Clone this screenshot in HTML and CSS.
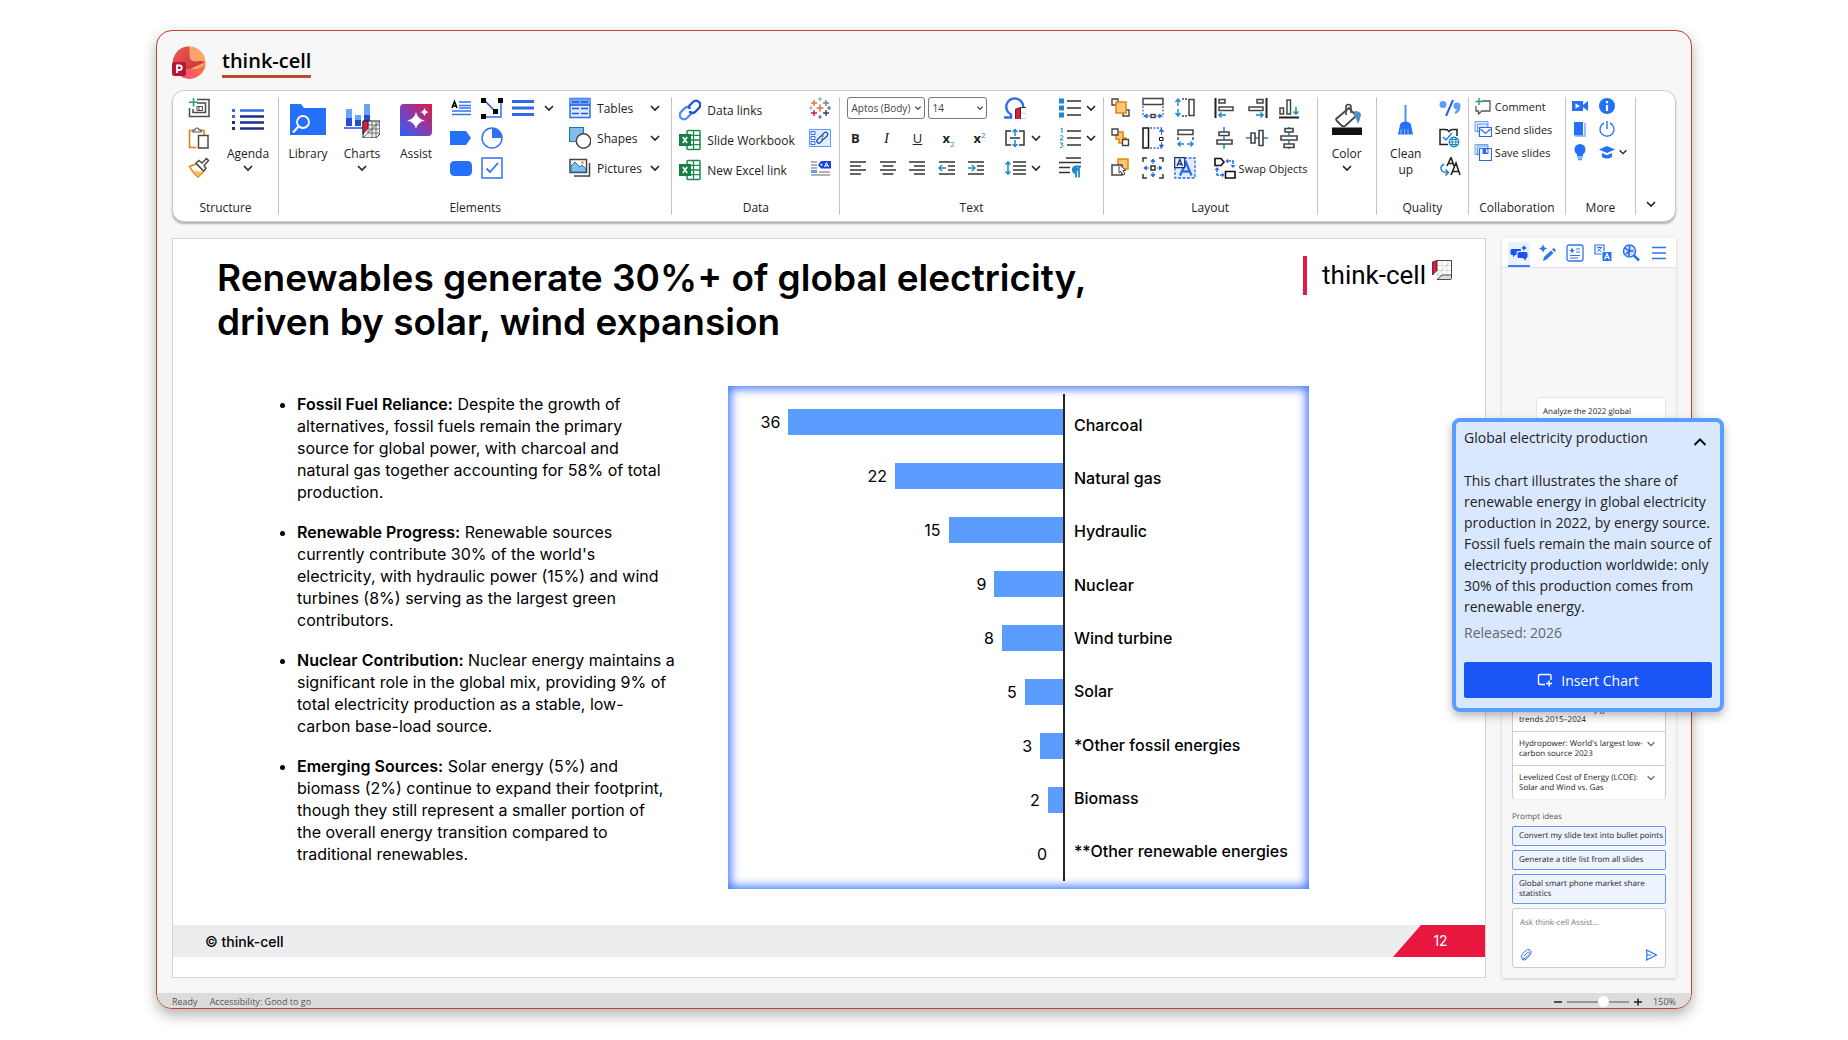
FILE: index.html
```html
<!DOCTYPE html>
<html lang="en">
<head>
    <meta charset="UTF-8">
    <meta name="viewport" content="width=device-width, initial-scale=1.0">
    <title>think-cell</title>
    <link rel="stylesheet" href="styles.css">
</head>
<body>
    <!-- shared icons -->
    <svg class="defs" aria-hidden="true">
        <symbol id="chev" viewBox="0 0 12 12"><path d="M2 4l4 4 4-4" fill="none" stroke="currentColor" stroke-width="1.6"/></symbol>
        <symbol id="excel" viewBox="0 0 22 22">
            <rect x="8" y="1.5" width="13" height="19" rx="1" fill="#fff" stroke="#1d8a4e" stroke-width="1.5"/>
            <path d="M8 6.3h13M8 11h13M8 15.7h13M14.5 2v18.500" stroke="#1d8a4e" stroke-width="1.3"/>
            <rect y="5" width="12" height="12" fill="#15803f"/>
            <path d="M3.800 8l4.400 6M8.200 8l-4.400 6" stroke="#fff" stroke-width="1.600"/>
        </symbol>
        <symbol id="cube" viewBox="0 0 20 20">
            <path d="M5 .5h14.500v15H5z" fill="#fff" stroke="#ccc" stroke-width=".7"/>
            <path d="M10 .5v15M15 .5v15M5 5.500h14.500M5 10.500h14.500M5 15L19 1" stroke="#ccc" stroke-width=".7"/>
            <path d="M.5 2L5 .5v10L.5 15z" fill="#e8173d" stroke="#222" stroke-width=".8"/>
            <path d="M5 19.500l5-4.500h9.500v3q0 1.500-1.500 1.500z" fill="#ddd" stroke="#222" stroke-width=".8"/>
            <path d="M5 .5h14.500V15" fill="none" stroke="#222" stroke-width=".8"/>
        </symbol>
    </svg>

    <div class="window">
        <header class="titlebar">
            <svg class="app-logo" viewBox="0 0 34 34">
                <defs>
                    <linearGradient id="lg1" x1="0" y1="0" x2="1" y2="1"><stop offset="0" stop-color="#f79a8a"/><stop offset="1" stop-color="#fcb04a"/></linearGradient>
                    <linearGradient id="lg2" x1="0" y1="0" x2="1" y2="1"><stop offset="0" stop-color="#f05a4c"/><stop offset="1" stop-color="#c0303e"/></linearGradient>
                    <linearGradient id="lg3" x1="0" y1="0" x2="1" y2="0"><stop offset="0" stop-color="#f0487f"/><stop offset="1" stop-color="#ff7043"/></linearGradient>
                </defs>
                <circle cx="17.500" cy="16.500" r="16" fill="url(#lg1)"/>
                <path d="M17.500.5A16 16 0 0 0 4 26l14-3 15.500-7q-4-1.500-9-.5Q17.500 16 17.500 9z" fill="url(#lg2)"/>
                <path d="M33.500 17A16 16 0 0 1 6 28l12-5q11 1 15.500-6z" fill="url(#lg3)"/>
                <rect y="16" width="14" height="14" rx="2.500" fill="#b3173a"/>
                <path d="M5 27v-7.500h2.500a2.200 2.200 0 0 1 0 4.500H5" fill="none" stroke="#fff" stroke-width="1.800"/>
            </svg>
            <h1 class="app-name">think-cell</h1>
        </header>

        <nav class="ribbon" aria-label="Ribbon">
            <section class="group g-structure">
                <div class="group-body">
                    <div class="stack">
                        <button class="tool" aria-label="Add slide"><svg viewBox="0 0 22 22"><path d="M9 2.500h12v17H1.500V11M9 6h8.500v9.500H5V12" fill="none" stroke="#4a4a4a" stroke-width="1.500"/><path d="M11 9.500h3.500v4H9v-4h2v4" fill="none" stroke="#4a4a4a"/><path d="M5.500 1v8.500M1 5.300h9" stroke="#1fa183" stroke-width="1.600"/></svg></button>
                        <button class="tool" aria-label="Paste"><svg viewBox="0 0 22 22"><path d="M5.500 3.500h-4v17h7M12 3.500h4V8" fill="none" stroke="#e8820c" stroke-width="1.600"/><path d="M5 5V3h2a2 2 0 0 1 4 0h2v2z" fill="#fff" stroke="#4a4a4a" stroke-width="1.200"/><rect x="10.500" y="8.500" width="9.500" height="12.500" fill="#fff" stroke="#4a4a4a" stroke-width="1.500"/></svg></button>
                        <button class="tool" aria-label="Format painter"><svg viewBox="0 0 22 22"><path d="M8 7l-6.500 2.500q3 6 8.500 10.500l6-6z" fill="#fff" stroke="#e8820c" stroke-width="1.500"/><path d="M4.500 13l9 2-3.500 4z" fill="#fbbf62"/><path d="M8 6l3-2.500 3 2.500 4.500-4.500 2 2L16 8.500l2 3-2.500 2.500z" fill="#fff" stroke="#4a4a4a" stroke-width="1.500"/></svg></button>
                    </div>
                    <button class="big"><svg class="big-icon" viewBox="0 0 36 36"><path d="M10 8.500h24" stroke="#2f6be8" stroke-width="2.500"/><path d="M10 14.500h24M10 20.500h24M10 26.500h24" stroke="#1c2f8c" stroke-width="2.500"/><path d="M3.500 7v3M3.500 13v3" stroke="#2f6be8" stroke-width="3"/><path d="M3.500 19v3M3.500 25v3" stroke="#1c2f8c" stroke-width="3"/></svg><span>Agenda</span><svg class="chev"><use href="#chev"/></svg></button>
                </div>
                <h2 class="group-label">Structure</h2>
            </section>

            <section class="group g-elements">
                <div class="group-body">
                    <button class="big"><svg class="big-icon" viewBox="0 0 36 36"><path d="M0 2h11l3 4h22v27H0z" fill="#2470fb"/><circle cx="13" cy="20" r="6" fill="none" stroke="#fff" stroke-width="1.800"/><path d="M9 24l-6 6.500" stroke="#fff" stroke-width="2"/></svg><span>Library</span></button>
                    <button class="big"><svg class="big-icon" viewBox="0 0 36 36"><path d="M2 7h6v9H2zM11 13h6v5h-6zM20 2h6v11h-6z" fill="#6ba3f7"/><path d="M2 16h6v8H2zM11 18h6v6h-6zM20 13h6v11h-6z" fill="#1f4fd6"/><path d="M0 26h21" stroke="#1f4fd6" stroke-width="1.500"/><path d="M19 19h17v13l-4 4H19z" fill="#eee" stroke="#222"/><path d="M24 19v12l-5 5M24 31h12M28 19v17M32 19v17M24 23h12M24 27h12M24 31L36 19" fill="none" stroke="#555" stroke-width=".8"/><path d="M19 19h5v7l-5 6z" fill="#e8173d" stroke="#222" stroke-width=".8"/></svg><span>Charts</span><svg class="chev"><use href="#chev"/></svg></button>
                    <button class="big"><svg class="big-icon" viewBox="0 0 36 36"><defs><linearGradient id="as" x1="0" y1="1" x2="1" y2="0"><stop offset="0" stop-color="#2a62f5"/><stop offset=".5" stop-color="#8a3bb0"/><stop offset="1" stop-color="#e0193f"/></linearGradient></defs><path d="M2 6q0-4 4-4h28v28q0 4-4 4H2z" fill="url(#as)"/><path d="M18 10q1.500 7 9 8.500-7.500 1.500-9 8.500-1.500-7-9-8.500 7.500-1.500 9-8.500zM26.500 6q.7 3 4 4-3.300 1-4 4-.7-3-4-4 3.300-1 4-4z" fill="#fff"/></svg><span>Assist</span></button>
                    <div class="tool-grid four">
                        <button class="tool" aria-label="Text box"><svg viewBox="0 0 22 22"><path d="M9 5h12M9 8.500h12M2 14h19M2 17.500h19M9 11h12" stroke="#2f73f0" stroke-width="1.300"/><path d="M2 11l2.500-6.500L7 11M2.500 9h4" fill="none" stroke="#000" stroke-width="1.600"/></svg></button>
                        <button class="tool" aria-label="Connector"><svg viewBox="0 0 22 22"><path d="M20 3v17H3" fill="none" stroke="#2f73f0" stroke-width="1.500"/><path d="M3 3l11 11" stroke="#2255b8" stroke-width="1.500"/><path d="M0 1h5v5H0zM17 1h5v5h-5zM12 12h5v5h-5zM0 17h5v5H0z" fill="#000"/></svg></button>
                        <button class="tool" aria-label="Lines"><svg viewBox="0 0 22 22"><path d="M0 4.500h22M0 11h22M0 17.500h22" stroke="#2f6be8" stroke-width="3"/></svg></button>
                        <button class="tool slim" aria-label="More lines"><svg class="chev"><use href="#chev"/></svg></button>
                        <button class="tool" aria-label="Pentagon"><svg viewBox="0 0 22 22"><path d="M0 4h16l5 7-5 7H0z" fill="#2470fb"/></svg></button>
                        <button class="tool" aria-label="Harvey ball"><svg viewBox="0 0 22 22"><circle cx="11" cy="11" r="10" fill="#fff" stroke="#2f73f0" stroke-width="1.500"/><path d="M11 11V1a10 10 0 0 1 10 10z" fill="#2f73f0"/></svg></button>
                        <span></span><span></span>
                        <button class="tool" aria-label="Rounded box"><svg viewBox="0 0 22 22"><rect y="4" width="22" height="15" rx="4.500" fill="#2470fb"/></svg></button>
                        <button class="tool" aria-label="Checkbox"><svg viewBox="0 0 22 22"><rect x="1" y="1" width="20" height="20" fill="#fff" stroke="#2f73f0" stroke-width="1.500"/><path d="M5.500 11.500l3.500 3.500 8-9" fill="none" stroke="#2f73f0" stroke-width="1.800"/></svg></button>
                    </div>
                    <div class="stack wide">
                        <button class="row"><svg viewBox="0 0 22 22"><path d="M1 1.500h20v19H1z" fill="#dbe8ff" stroke="#2f6be8" stroke-width="1.500"/><path d="M1 1.500h20v6H1z" fill="#6ba3f7"/><path d="M3 5h7M12 5h7M3 11.500h7M12 11.500h7M3 16.500h7M12 16.500h7M1 8h20" stroke="#2255d8" stroke-width="1.300"/></svg><span>Tables</span><svg class="chev"><use href="#chev"/></svg></button>
                        <button class="row"><svg viewBox="0 0 22 22"><path d="M.5.5h14v14H.5z" fill="#83bdea" stroke="#1477b8" stroke-width="1.200"/><circle cx="14.500" cy="14" r="7.200" fill="#fff" stroke="#444" stroke-width="1.500"/></svg><span>Shapes</span><svg class="chev"><use href="#chev"/></svg></button>
                        <button class="row"><svg viewBox="0 0 22 22"><path d="M20.500 6v13H5" fill="none" stroke="#444" stroke-width="1.500"/><path d="M1 2.500h16.500v13H1z" fill="#fff" stroke="#444" stroke-width="1.500"/><path d="M2 9l4-4 4.500 5 2.500-2 4 4v3H2z" fill="#83bdea" stroke="#1477b8"/><circle cx="13.500" cy="5.500" r="1.200" fill="#e8820c"/></svg><span>Pictures</span><svg class="chev"><use href="#chev"/></svg></button>
                    </div>
                </div>
                <h2 class="group-label">Elements</h2>
            </section>

            <section class="group g-data">
                <div class="group-body">
                    <div class="stack links">
                        <button class="row"><svg viewBox="0 0 22 22"><g fill="none" stroke-width="2.400" stroke-linecap="round"><path d="M12 13.500a4 4 0 0 1-.5 2L8 19a4 4 0 0 1-6-6l4-4a4 4 0 0 1 5 0" stroke="#4f8ff5"/><path d="M10 8.500a4 4 0 0 1 .5-2L14 3a4 4 0 0 1 6 6l-4 4a4 4 0 0 1-5 0" stroke="#1f56d8"/></g></svg><span>Data links</span></button>
                        <button class="row"><svg><use href="#excel"/></svg><span>Slide Workbook</span></button>
                        <button class="row"><svg><use href="#excel"/></svg><span>New Excel link</span></button>
                    </div>
                    <div class="stack">
                        <button class="tool" aria-label="Tableau"><svg viewBox="0 0 22 22"><path d="M11 7.500v7M7.500 11h7" stroke="#e8762d" stroke-width="1.600"/><path d="M5 3v6M2 6h6" stroke="#e8762d" stroke-width="1.400"/><path d="M17 3v6M14 6h6" stroke="#5b879b" stroke-width="1.400"/><path d="M5 13v6M2 16h6" stroke="#c72037" stroke-width="1.400"/><path d="M17 13v6M14 16h6" stroke="#1f457e" stroke-width="1.400"/><path d="M11 0v4M9 2h4" stroke="#7ab" stroke-width="1.200"/><path d="M11 18v4M9 20h4" stroke="#5a5ea8" stroke-width="1.200"/><path d="M2 9v4M0 11h4" stroke="#7ab8d8" stroke-width="1.200"/><path d="M20 9v4M18 11h4" stroke="#3d6fb0" stroke-width="1.200"/></svg></button>
                        <button class="tool" aria-label="Link slide"><svg viewBox="0 0 22 22"><path d="M.5 2.500h21v17H.5z" fill="#e3eeff" stroke="#5b9cff"/><path d="M2 4.500h4v3H2zM2 9.500h4v3H2zM2 14.500h4v3H2z" fill="#fff" stroke="#2f73f0"/><g fill="none" stroke="#1f4fa8" stroke-width="1.300"><path d="M14 12.500l-2.500 3a2.100 2.100 0 0 1-3-3l3-3a2.200 2.200 0 0 1 3 0"/><path d="M12.500 11.500a2.200 2.200 0 0 0 3 0l3-3a2.200 2.200 0 0 0-3-3l-2.500 2.500"/></g></svg></button>
                        <button class="tool" aria-label="Tag text"><svg viewBox="0 0 22 22"><path d="M2 5h6M2 8h6M2 11h6M10 15h11M2 18h19" stroke="#999" stroke-width="1.500"/><path d="M2 14.500h6" stroke="#5b9cff" stroke-width="3"/><path d="M12 4h10v7.500H12L9 8z" fill="#1a44e0"/><path d="M15.500 10l2-4.500 2 4.500M16 8.700h3" fill="none" stroke="#fff"/><circle cx="12.500" cy="7.800" r="1" fill="#fff"/></svg></button>
                    </div>
                </div>
                <h2 class="group-label">Data</h2>
            </section>

            <section class="group g-text">
                <div class="group-body">
                    <div class="stack text-tools">
                        <div class="line">
                            <label class="pick font"><select aria-label="Font"><option>Aptos (Body)</option></select><svg class="chev"><use href="#chev"/></svg></label>
                            <label class="pick size"><select aria-label="Font size"><option>14</option></select><svg class="chev"><use href="#chev"/></svg></label>
                        </div>
                        <div class="line">
                            <button class="tool glyph"><b>B</b></button>
                            <button class="tool glyph"><i class="ital">I</i></button>
                            <button class="tool glyph"><u>U</u></button>
                            <button class="tool glyph"><strong>x<sub>2</sub></strong></button>
                            <button class="tool glyph"><strong>x<sup>2</sup></strong></button>
                        </div>
                        <div class="line">
                            <button class="tool" aria-label="Align left"><svg viewBox="0 0 22 22"><path d="M3 5h16M3 9h11M3 13h16M3 17h11" stroke="#333" stroke-width="1.300"/></svg></button>
                            <button class="tool" aria-label="Center"><svg viewBox="0 0 22 22"><path d="M3 5h16M5.500 9h11M3 13h16M5.500 17h11" stroke="#333" stroke-width="1.300"/></svg></button>
                            <button class="tool" aria-label="Align right"><svg viewBox="0 0 22 22"><path d="M3 5h16M8 9h11M3 13h16M8 17h11" stroke="#333" stroke-width="1.300"/></svg></button>
                            <button class="tool" aria-label="Decrease indent"><svg viewBox="0 0 22 22"><path d="M3 5h16M12 9h7M12 13h7M3 17h16" stroke="#333" stroke-width="1.300"/><path d="M10 11H3M6 8l-3 3 3 3" fill="none" stroke="#1b87cc" stroke-width="1.400"/></svg></button>
                            <button class="tool" aria-label="Increase indent"><svg viewBox="0 0 22 22"><path d="M3 5h16M12 9h7M12 13h7M3 17h16" stroke="#333" stroke-width="1.300"/><path d="M3 11h7M7 8l3 3-3 3" fill="none" stroke="#1b87cc" stroke-width="1.400"/></svg></button>
                        </div>
                    </div>
                    <div class="stack">
                        <button class="tool" aria-label="Symbols"><svg viewBox="0 0 22 22"><path d="M0 20.500h7v-3A8.500 8.500 0 1 1 19 12" fill="none" stroke="#2f6be8" stroke-width="2.400"/><svg x="11" y="10" width="11" height="11"><use href="#cube"/></svg></svg></button>
                        <button class="tool split" aria-label="Vertical align"><svg viewBox="0 0 22 22"><path d="M7 4H2v14h5M15 4h5v14h-5M6 11h10" fill="none" stroke="#333" stroke-width="1.500"/><path d="M11 9V3M8.500 5L11 2.500 13.500 5M11 13v6M8.500 17l2.500 2.500 2.500-2.500" fill="none" stroke="#1b87cc" stroke-width="1.500"/></svg><svg class="chev"><use href="#chev"/></svg></button>
                        <button class="tool split" aria-label="Line spacing"><svg viewBox="0 0 22 22"><path d="M9 5h13M9 9h13M9 13h13M9 17h13" stroke="#333" stroke-width="1.300"/><path d="M4 5v12M1.500 7.500L4 5l2.500 2.500M1.500 14.500L4 17l2.500-2.500" fill="none" stroke="#1b87cc" stroke-width="1.500"/></svg><svg class="chev"><use href="#chev"/></svg></button>
                    </div>
                    <div class="stack">
                        <button class="tool split" aria-label="Bullets"><svg viewBox="0 0 22 22"><path d="M0 1.500h5v5H0zM0 8.500h5v5H0zM0 15.500h5v5H0z" fill="#1b87cc"/><path d="M8 4h14M8 11h14M8 18h14" stroke="#333" stroke-width="1.500"/></svg><svg class="chev"><use href="#chev"/></svg></button>
                        <button class="tool split" aria-label="Numbering"><svg viewBox="0 0 22 22"><path d="M1.500 2L3 1v5M1 9q3-1 3 .5 0 1-3 3.500h3.500M1 16h3l-1.500 2q2 0 1.500 1.500-.5 1.500-3 1" fill="none" stroke="#1b87cc"/><path d="M8 4h14M8 11h14M8 18h14" stroke="#333" stroke-width="1.500"/></svg><svg class="chev"><use href="#chev"/></svg></button>
                        <button class="tool" aria-label="Paragraph"><svg viewBox="0 0 22 22"><path d="M7 1h15M0 5.500h22M0 10.500h11M0 15.500h11" stroke="#333" stroke-width="1.500"/><path d="M22 9.500h-5a3 3 0 0 0 0 6.500v4.500M20 9.500v11" fill="none" stroke="#1b87cc" stroke-width="1.800"/><circle cx="16.500" cy="12.500" r="2.500" fill="#1b87cc"/></svg></button>
                    </div>
                </div>
                <h2 class="group-label">Text</h2>
            </section>

            <section class="group g-layout">
                <div class="group-body">
                    <div class="tool-grid three">
                        <button class="tool" aria-label="Bring forward"><svg viewBox="0 0 22 22"><path d="M2 2h6v6H2zM13 13h6v6h-6z" fill="#fff" stroke="#444" stroke-width="1.400"/><path d="M6 5h10v11H6z" fill="#fcc878" stroke="#e8820c" stroke-width="1.500"/></svg></button>
                        <button class="tool" aria-label="Same width"><svg viewBox="0 0 22 22"><path d="M1 1.500h20v6H1zM9 17.500h4v3H9z" fill="#fff" stroke="#444" stroke-width="1.500"/><path d="M1 9v11M21 9v11" stroke="#2f6be8" stroke-width="1.300" stroke-dasharray="2 1.500"/><path d="M8 19H3M5 17l-3 2 3 2zM14 19h5M17 17l3 2-3 2z" fill="#2f6be8" stroke="#2f6be8"/></svg></button>
                        <button class="tool" aria-label="Same height"><svg viewBox="0 0 22 22"><path d="M15 2.500h5v16h-5z" fill="#fff" stroke="#444" stroke-width="1.500"/><path d="M8 2h5M8 19h5" stroke="#444" stroke-width="1.300" stroke-dasharray="2 1"/><path d="M4 9V2M1.500 5L4 2l2.500 3M4 12v7M1.500 16L4 19l2.500-3" fill="none" stroke="#1b87cc" stroke-width="1.400"/></svg></button>
                        <button class="tool" aria-label="Send backward"><svg viewBox="0 0 22 22"><path d="M6 5h7v6h3v5H9v-4H6z" fill="#fcc878" stroke="#e8820c" stroke-width="1.500"/><path d="M2 2h6v6H2zM12.500 12.500h6v6h-6z" fill="#fff" stroke="#444" stroke-width="1.400"/></svg></button>
                        <button class="tool" aria-label="Stretch height"><svg viewBox="0 0 22 22"><path d="M1 1h5.500v20H1z" fill="#fff" stroke="#111" stroke-width="1.500"/><path d="M8 1h12M8 21h12" stroke="#2f6be8" stroke-width="1.400" stroke-dasharray="2 1.500"/><path d="M19.500 8V2M17.500 4.500l2-3 2 3zM19.500 15v5M17.500 18l2 3 2-3z" fill="#2f6be8" stroke="#2f6be8"/><path d="M17.500 10.500h3.500v3h-3.500z" fill="#fff" stroke="#111"/></svg></button>
                        <button class="tool" aria-label="Equal spacing"><svg viewBox="0 0 22 22"><path d="M4 3h15v4.500H4z" fill="#fff" stroke="#444" stroke-width="1.500"/><path d="M4 10v3M19 10v3" stroke="#444" stroke-width="1.400"/><path d="M10 17H4M6.500 14.500L4 17l2.500 2.500M13 17h6M16.500 14.500L19 17l-2.500 2.500" fill="none" stroke="#1b87cc" stroke-width="1.400"/></svg></button>
                        <button class="tool" aria-label="Select"><svg viewBox="0 0 22 22"><path d="M8 2h10v10H8z" fill="#fcc878" stroke="#e8820c" stroke-width="1.500"/><path d="M2 8h10v10H2z" fill="#fff" stroke="#444" stroke-width="1.500"/><path d="M9 7v9l2-1.500 2 3.500 2-1-2-3.500h3z" fill="#fff" stroke="#444"/></svg></button>
                        <button class="tool" aria-label="Fit"><svg viewBox="0 0 22 22"><path d="M1 5V1h4M17 1h4v4M21 17v4h-4M5 21H1v-4M9 9h4v4H9z" fill="none" stroke="#333" stroke-width="1.500"/><path d="M11 7V3M9 4.500L11 2l2 2.500zM11 15v4M9 17.500l2 2.500 2-2.500zM7 11H3M4.500 9L2 11l2.500 2zM15 11h4M17.500 9l2.500 2-2.500 2z" fill="#2f6be8" stroke="#2f6be8"/></svg></button>
                        <button class="tool" aria-label="Same format"><svg viewBox="0 0 22 22"><path d="M1 1h20v20H1z" fill="#e3edff" stroke="#2f6be8" stroke-width="1.300" stroke-dasharray="3 1.500"/><path d="M6 18.500l6-13 5.500 13M9 14.500h7" fill="none" stroke="#2f6be8" stroke-width="2.400"/><path d="M.7.700h10v10h-10z" fill="#e8f0ff" stroke="#15337a" stroke-width="1.200"/><path d="M3 9l2.800-6.500L8.500 9M4 7h4" fill="none" stroke="#15337a" stroke-width="1.300"/></svg></button>
                    </div>
                    <div class="stack">
                        <div class="line">
                            <button class="tool" aria-label="Align objects left"><svg viewBox="0 0 22 22"><path d="M1.500 1v20" stroke="#222" stroke-width="2"/><path d="M5 2.500h6V6H5zM5 10h14v3.500H5z" fill="#fff" stroke="#444" stroke-width="1.500"/><path d="M12 18H5M7.500 15.500L5 18l2.500 2.500" fill="none" stroke="#1b87cc" stroke-width="1.500"/></svg></button>
                            <button class="tool" aria-label="Align objects right"><svg viewBox="0 0 22 22"><path d="M20.500 1v20" stroke="#222" stroke-width="2"/><path d="M11 2.500h6V6h-6zM3 10h14v3.500H3z" fill="#fff" stroke="#444" stroke-width="1.500"/><path d="M10 18h7M14.500 15.500L17 18l-2.500 2.500" fill="none" stroke="#1b87cc" stroke-width="1.500"/></svg></button>
                            <button class="tool" aria-label="Align objects bottom"><svg viewBox="0 0 22 22"><path d="M1 20.500h20" stroke="#222" stroke-width="2"/><path d="M2 11h3.500v6H2zM9 3h3.500v14H9z" fill="#fff" stroke="#444" stroke-width="1.500"/><path d="M18 10v7M15.500 14.500L18 17l2.500-2.500" fill="none" stroke="#1b87cc" stroke-width="1.500"/></svg></button>
                        </div>
                        <div class="line">
                            <button class="tool" aria-label="Align middle"><svg viewBox="0 0 22 22"><path d="M10 0v22" stroke="#1b87cc" stroke-width="1.500"/><path d="M5 5h10v3.500H5zM3 13h15v4H3z" fill="#fff" stroke="#444" stroke-width="1.600"/></svg></button>
                            <button class="tool" aria-label="Align center"><svg viewBox="0 0 22 22"><path d="M0 11h22" stroke="#1b87cc" stroke-width="1.500"/><path d="M5 6h4v10H5zM13 3.500h4v15h-4z" fill="#fff" stroke="#444" stroke-width="1.600"/></svg></button>
                            <button class="tool" aria-label="Distribute"><svg viewBox="0 0 22 22"><path d="M11 0v22" stroke="#1b87cc" stroke-width="1.500"/><path d="M7 1.500h8V5H7zM3 9h16v4H3zM6 17h10v3.500H6z" fill="#fff" stroke="#444" stroke-width="1.600"/></svg></button>
                        </div>
                        <button class="row swap"><svg viewBox="0 0 22 22"><path d="M1 1.500h6l3 3.500-3 3.500H1zM11.500 14.500h9.500v6.500h-9.500z" fill="#fff" stroke="#111" stroke-width="1.600"/><path d="M13 4h6v6M3 11v7h6" fill="none" stroke="#2f6be8" stroke-width="1.500" stroke-dasharray="4 1"/><path d="M16.500 8l2.500 3 2.500-3zM.5 13L3 10l2.500 3zM8 15.500l2.500 2.500L8 20.500zM14 1.500L11.500 4 14 6.500z" fill="#2f6be8"/></svg><span>Swap Objects</span></button>
                    </div>
                </div>
                <h2 class="group-label">Layout</h2>
            </section>

            <section class="group g-color">
                <div class="group-body">
                    <button class="big"><svg class="big-icon" viewBox="0 0 36 36"><path d="M7 17L20 6l7 8-11 10q-2 1-4-1l-4-4q-1-1-1-2z" fill="#fff" stroke="#444" stroke-width="1.800"/><path d="M17 13V5q0-2.500 2.500-2.500T22 5v6" fill="none" stroke="#444" stroke-width="1.600"/><path d="M25 9q7 0 7 4-1 5-3 9-2-6-4-9z" fill="#4f8fc4"/><path d="M3 25.500h30V33H3z" fill="#111"/></svg><span>Color</span><svg class="chev"><use href="#chev"/></svg></button>
                </div>
            </section>

            <section class="group g-quality">
                <div class="group-body">
                    <button class="big"><svg class="big-icon" viewBox="0 0 36 36"><path d="M17.500 3v17" stroke="#4f8ff5" stroke-width="2"/><path d="M12 23q0-3 5.500-3.500Q23 20 23 23l2 9.500H10z" fill="#2470fb"/><path d="M13 27v6M16.500 27v6M20 27v6" stroke="#8fb8fb"/></svg><span>Clean<br>up</span></button>
                    <div class="stack">
                        <button class="tool" aria-label="Punctuation"><svg viewBox="0 0 22 22"><circle cx="4" cy="7.500" r="3.500" fill="#5b9cff"/><path d="M14 3L7 19" stroke="#2460e8" stroke-width="2"/><circle cx="18" cy="9" r="3.500" fill="#5b9cff"/><path d="M20 10q0 4-4 6" fill="none" stroke="#5b9cff" stroke-width="2.500"/></svg></button>
                        <button class="tool" aria-label="Proofing language"><svg viewBox="0 0 22 22"><path d="M9 17.500H1V2.500h5q3 0 4 2 1-2 4-2h4V9" fill="none" stroke="#222" stroke-width="1.500"/><path d="M4 10l3 3 6-7" fill="none" stroke="#2f73f0" stroke-width="1.500"/><circle cx="15" cy="15" r="4.800" fill="#fff" stroke="#1b87cc" stroke-width="1.300"/><ellipse cx="15" cy="15" rx="2" ry="4.800" fill="none" stroke="#1b87cc"/><path d="M10 15h10M11 12.500h8M11 17.500h8" stroke="#1b87cc"/></svg></button>
                        <button class="tool" aria-label="Replace fonts"><svg viewBox="0 0 22 22"><path d="M8 9l4-8.500L15 9M9 6.500h5M12 18l5-12 4 12M13.500 14.500h6" fill="none" stroke="#222" stroke-width="1.600"/><path d="M5 7q-5 3-2 7 2 2 6 1.500M6.500 12.500l3 3-3 3" fill="none" stroke="#1b87cc" stroke-width="1.500"/></svg></button>
                    </div>
                </div>
                <h2 class="group-label">Quality</h2>
            </section>

            <section class="group g-collab">
                <div class="group-body">
                    <div class="stack tight">
                        <button class="row"><svg viewBox="0 0 18 18"><path d="M8 4h8v10H8l-3.500 3v-3H2V9" fill="none" stroke="#555" stroke-width="1.300"/><path d="M5 1v7M1.500 4.500h7" stroke="#27a35f" stroke-width="1.400"/></svg><span>Comment</span></button>
                        <button class="row"><svg viewBox="0 0 18 18"><path d="M1 1.500h13v10H1zM3.500 4h10v8h-10z" fill="#dbe8ff" stroke="#6ba3f7"/><path d="M5.500 7.500h12v9h-12z" fill="#fff" stroke="#2f6be8" stroke-width="1.200"/><path d="M6.500 9l5 4.500 5-4.500" fill="none" stroke="#2f6be8" stroke-width="1.300"/></svg><span>Send slides</span></button>
                        <button class="row"><svg viewBox="0 0 18 18"><path d="M1 1.500h13v10H1zM3.500 3h10v8h-10z" fill="#dbe8ff" stroke="#6ba3f7"/><path d="M5.500 5.500h12v12h-12z" fill="#fff" stroke="#2f6be8" stroke-width="1.200"/><path d="M8.500 5.500h6V11h-6z" fill="#2f6be8"/><path d="M12 6.500h1.500v3H12z" fill="#fff"/></svg><span>Save slides</span></button>
                    </div>
                </div>
                <h2 class="group-label">Collaboration</h2>
            </section>

            <section class="group g-more">
                <div class="group-body">
                    <div class="stack tight">
                        <button class="mini" aria-label="Video"><svg viewBox="0 0 18 18"><path d="M1 4h11v10H1zM12 8l5-4v10l-5-4z" fill="#2470fb"/><path d="M4.500 6.500v5L9 9z" fill="#fff"/></svg></button>
                        <button class="mini" aria-label="Manual"><svg viewBox="0 0 18 18"><path d="M3 2h9v12H3z" fill="#2470fb"/><path d="M14 3v13H4" fill="none" stroke="#7fb0fb" stroke-width="1.500"/><path d="M3 14.500h9" stroke="#2470fb" stroke-width="1.500"/></svg></button>
                        <button class="mini" aria-label="Tips"><svg viewBox="0 0 18 18"><circle cx="9" cy="6.500" r="5.500" fill="#2470fb"/><path d="M6 10h6v3.500H6z" fill="#2470fb"/><path d="M6.500 15h5M7 16.700h4" stroke="#5b9cff" stroke-width="1.300"/></svg></button>
                    </div>
                    <div class="stack tight">
                        <button class="mini" aria-label="Info"><svg viewBox="0 0 18 18"><circle cx="9" cy="9" r="8" fill="#2470fb"/><path d="M9 8v6M9 4v2.200" stroke="#fff" stroke-width="2.200"/></svg></button>
                        <button class="mini" aria-label="Power"><svg viewBox="0 0 18 18"><path d="M6 3a7 7 0 1 0 6 0M9 1v8" fill="none" stroke="#2f73f0" stroke-width="1.400"/></svg></button>
                        <button class="mini split" aria-label="Training"><svg viewBox="0 0 18 18"><path d="M1 6.500L9 3l8 3.500L9 10z" fill="#2470fb"/><path d="M4 10l5 2.200 5-2.200v4q-5 3-10 0z" fill="#2470fb"/></svg><svg class="chev"><use href="#chev"/></svg></button>
                    </div>
                </div>
                <h2 class="group-label">More</h2>
            </section>

            <div class="group g-end">
                <button class="tool slim" aria-label="Collapse ribbon"><svg class="chev"><use href="#chev"/></svg></button>
            </div>
        </nav>

        <main class="workspace">
            <article class="slide">
                <div class="slide-head">
                    <h2 class="slide-title">Renewables generate 30%+ of global electricity,<br>driven by solar, wind expansion</h2>
                    <div class="brand"><span>think-cell</span><svg><use href="#cube"/></svg></div>
                </div>
                <div class="slide-body">
                    <ul class="points">
                        <li><b>Fossil Fuel Reliance:</b> Despite the growth of alternatives, fossil fuels remain the primary source for global power, with charcoal and<br>natural gas together accounting for 58% of total production.</li>
                        <li><b>Renewable Progress:</b> Renewable sources currently contribute 30% of the world's electricity, with hydraulic power (15%) and wind turbines (8%) serving as the largest green contributors.</li>
                        <li><b>Nuclear Contribution:</b> Nuclear energy maintains a significant role in the global mix, providing 9% of total electricity production as a stable, low-carbon base-load source.</li>
                        <li><b>Emerging Sources:</b> Solar energy (5%) and biomass (2%) continue to expand their footprint, though they still represent a smaller portion of<br>the overall energy transition compared to traditional renewables.</li>
                    </ul>
                    <div class="chart">
                        <div class="bars">
                            <div class="bar-row"><span>36</span><div class="bar" style="width: 84%"></div></div>
                            <div class="bar-row"><span>22</span><div class="bar" style="width: 51.4%"></div></div>
                            <div class="bar-row"><span>15</span><div class="bar" style="width: 35%"></div></div>
                            <div class="bar-row"><span>9</span><div class="bar" style="width: 21%"></div></div>
                            <div class="bar-row"><span>8</span><div class="bar" style="width: 18.7%"></div></div>
                            <div class="bar-row"><span>5</span><div class="bar" style="width: 11.7%"></div></div>
                            <div class="bar-row"><span>3</span><div class="bar" style="width: 7%"></div></div>
                            <div class="bar-row"><span>2</span><div class="bar" style="width: 4.7%"></div></div>
                            <div class="bar-row zero"><span>0</span></div>
                        </div>
                        <div class="bar-labels">
                            <span>Charcoal</span>
                            <span>Natural gas</span>
                            <span>Hydraulic</span>
                            <span>Nuclear</span>
                            <span>Wind turbine</span>
                            <span>Solar</span>
                            <span>*Other fossil energies</span>
                            <span>Biomass</span>
                            <span>**Other renewable energies</span>
                        </div>
                    </div>
                </div>
                <footer class="slide-foot"><span>© think-cell</span><span class="page-no">12</span></footer>
            </article>

            <aside class="pane">
                <div class="tabs">
                    <button class="tab active" aria-label="Chat"><svg viewBox="0 0 18 18"><path d="M2 5h8q1 0 1 1v1H8Q6.500 7 6.500 9v2H5l-2 2.500V11H2q-1.500 0-1.500-1.500v-3Q.5 5 2 5zM9 8h7q1.500 0 1.500 1.500v3Q17.500 14 16 14l-.5 2.500L13 14H9q-1.500 0-1.500-1.500v-3Q7.500 8 9 8zM14 1q.5 2.500 3 3-2.500.5-3 3-.5-2.500-3-3 2.500-.5 3-3z" fill="#1a53f5"/></svg></button>
                    <button class="tab" aria-label="Write"><svg viewBox="0 0 18 18"><path d="M5 0q.6 4 4.500 4.500Q5.600 5 5 9 4.400 5 .5 4.500 4.400 4 5 0zM6 13l7-6.500 2.500 2.500-7 6.500-3.500 1.500zM14 5.500l1-1q1-.5 2 .5t.5 2l-1 1z" fill="#2f73f0"/></svg></button>
                    <button class="tab" aria-label="Summary"><svg viewBox="0 0 18 18"><rect x="1" y="1" width="16" height="16" rx="2" fill="none" stroke="#2f73f0" stroke-width="1.300"/><path d="M6 3.500q.5 2.500 3 3-2.500.5-3 3-.5-2.500-3-3 2.500-.5 3-3z" fill="#2f73f0"/><path d="M10 5h4M10 8h4M4 11.500h10M4 14h8" stroke="#2f73f0" stroke-width="1.200"/></svg></button>
                    <button class="tab" aria-label="Translate"><svg viewBox="0 0 18 18"><path d="M7.500 10H1V1h9v6" fill="none" stroke="#2f73f0" stroke-width="1.200"/><path d="M3 3.500h5M5.500 2.500v1M3.500 8l3.500-4M4 4.500L7.500 8" fill="none" stroke="#2f73f0"/><path d="M8.500 8h9v9h-9z" fill="#2470fb"/><path d="M10.500 15.500l2.500-6 2.500 6M11.500 13.500h3" fill="none" stroke="#fff" stroke-width="1.200"/></svg></button>
                    <button class="tab" aria-label="Research"><svg viewBox="0 0 18 18"><circle cx="7.500" cy="7" r="6" fill="#cfe0ff" stroke="#2f73f0" stroke-width="1.500"/><path d="M7.500 2v5h4M7.500 7L4 10M3 4l4 3v5" fill="none" stroke="#2460e8" stroke-width="1.500"/><path d="M12 11.500l5 5" stroke="#2470fb" stroke-width="2.500"/></svg></button>
                    <button class="tab" aria-label="Menu"><svg viewBox="0 0 18 18"><path d="M2 3.500h14M2 9h14M2 14.500h14" stroke="#2f73f0" stroke-width="1.400"/></svg></button>
                </div>
                <div class="chat">
                    <p class="bubble">Analyze the 2022 global</p>
                    <div class="results">
                        <button class="result"><span>Global coal electricity generation trends 2015–2024</span><svg class="chev"><use href="#chev"/></svg></button>
                        <button class="result"><span>Hydropower: World's largest low-carbon source 2023</span><svg class="chev"><use href="#chev"/></svg></button>
                        <button class="result"><span>Levelized Cost of Energy (LCOE): Solar and Wind vs. Gas</span><svg class="chev"><use href="#chev"/></svg></button>
                    </div>
                </div>
                <div class="prompts">
                    <h3>Prompt ideas</h3>
                    <button>Convert my slide text into bullet points</button>
                    <button>Generate a title list from all slides</button>
                    <button>Global smart phone market share<br>statistics</button>
                </div>
                <form class="ask">
                    <textarea aria-label="Ask think-cell Assist" placeholder="Ask think-cell Assist..."></textarea>
                    <div class="ask-actions">
                        <button type="button" aria-label="Attach"><svg viewBox="0 0 12 12"><path d="M3.500 7.500l4-4a1.200 1.200 0 0 1 1.700 1.700L5.500 9A2.400 2.400 0 0 1 2 5.500l3.500-3.800a3 3 0 0 1 5 3.500L7 9.500q-2.500 2.500-5 1" fill="none" stroke="#2f73f0"/></svg></button>
                        <button type="button" aria-label="Send"><svg viewBox="0 0 12 12"><path d="M1.500 1l10 5-10 5 .5-5zM2 6h4.500" fill="none" stroke="#2f73f0" stroke-width="1.200"/></svg></button>
                    </div>
                </form>
            </aside>
        </main>

        <footer class="status">
            <span>Ready</span>
            <span>Accessibility: Good to go</span>
            <div class="zoom">
                <button aria-label="Zoom out"><svg viewBox="0 0 8 8"><path d="M0 4h8" stroke="#222" stroke-width="1.500"/></svg></button>
                <input type="range" min="0" max="100" value="61" aria-label="Zoom">
                <button aria-label="Zoom in"><svg viewBox="0 0 8 8"><path d="M0 4h8M4 .5v7" stroke="#222" stroke-width="1.500"/></svg></button>
                <output>150%</output>
            </div>
        </footer>

        <!-- chart card on top of the side pane -->
        <section class="card">
            <div class="card-head">
                <h2>Global electricity production</h2>
                <button aria-label="Collapse"><svg viewBox="0 0 14 14"><path d="M1.500 10L7 4.500l5.500 5.500" fill="none" stroke="#111" stroke-width="2"/></svg></button>
            </div>
            <p class="card-text">This chart illustrates the share of renewable energy in global electricity production in 2022, by energy source. Fossil fuels remain the main source of electricity production worldwide: only 30% of this production comes from renewable energy.</p>
            <p class="released">Released: 2026</p>
            <button class="insert"><svg viewBox="0 0 16 14"><path d="M8 11.500H3q-1.500 0-1.500-1.500V3Q1.500 1.500 3 1.500h9.500Q14 1.500 14 3v4M12 7.500v6M9 10.500h6" fill="none" stroke="#fff" stroke-width="1.400"/></svg>Insert Chart</button>
        </section>
    </div>
</body>
</html>
```
FILE: styles.css
```css
:root {
    --blue: #5b9cff;
    --blue-strong: #1a56f5;
    --frame: #bf452b;
    --bg: #f7f7f7;
    --ui: "Open Sans", "Noto Sans", sans-serif;
    --slide: Inter, "Liberation Sans", sans-serif;
}

* {
    box-sizing: border-box;
}

body {
    margin: 0;
    min-height: 100vh;
    padding: 30px 156px 31px;
    display: flex;
    background: #fff;
    font-family: var(--ui);
    color: #222;
}

h1, h2, h3, p, ul {
    margin: 0;
    padding: 0;
    font-weight: 400;
}

button {
    border: 0;
    padding: 0;
    background: none;
    font: inherit;
    color: inherit;
    cursor: pointer;
}

svg {
    display: block;
    flex: none;
}

.defs {
    position: absolute;
    width: 0;
    height: 0;
}

.window {
    position: relative;
    flex: 1;
    min-width: 0;
    display: flex;
    flex-direction: column;
    background: var(--bg);
    border: 1px solid var(--frame);
    border-radius: 16px;
    box-shadow: 0 6px 14px rgba(0, 0, 0, 0.3);
}

/* title */
.titlebar {
    display: flex;
    align-items: center;
    gap: 16px;
    height: 59px;
    padding: 4px 15px 0;
}

.app-logo {
    width: 34px;
    height: 34px;
}

.app-name {
    font-size: 20px;
    line-height: 28px;
    font-weight: 600;
    color: #000;
    border-bottom: 3px solid var(--frame);
    border-radius: 1px;
}

/* ribbon */
.ribbon {
    margin: 0 15px;
    height: 132px;
    padding: 6px 0;
    display: grid;
    grid-template-columns: 106fr 393fr 168fr 263fr 214fr 59fr 92fr 97fr 70fr 39fr;
    background: #fff;
    border: 1px solid #ccc;
    border-radius: 12px;
    box-shadow: 0 2px 2px rgba(0, 0, 0, 0.28);
}

.group {
    min-width: 0;
    display: flex;
    flex-direction: column;
    justify-content: space-between;
    border-right: 1px solid #c4c4c4;
    font-size: 12px;
    white-space: nowrap;
}

.g-end {
    border: 0;
    justify-content: flex-end;
    align-items: center;
    padding-right: 8px;
}

.group-body {
    display: flex;
    align-items: flex-start;
}

.group-label {
    font-size: 12px;
    line-height: 14px;
    text-align: center;
}

.g-structure .group-body { padding-left: 15px; gap: 18px; }
.g-elements .group-body { padding-left: 9px; gap: 14px; }
.g-data .group-body { padding: 0 8px 0 7px; justify-content: space-between; }
.g-text .group-body { padding-left: 7px; gap: 17px; }
.g-layout .group-body { padding-left: 6px; gap: 18px; }
.g-color .group-body { justify-content: center; }
.g-quality .group-body { padding-left: 9px; gap: 13px; }
.g-collab .group-body { padding-left: 5px; }
.g-more .group-body { padding-left: 5px; gap: 9px; }

.stack {
    display: flex;
    flex-direction: column;
    align-items: flex-start;
    gap: 8px;
}

.stack.tight {
    gap: 5px;
}

.stack.wide {
    width: 92px;
    align-items: stretch;
}

.stack.links {
    padding-top: 2px;
}

.tool,
.tool svg,
.row svg {
    width: 22px;
    height: 22px;
}

.mini,
.mini svg,
.tight .row svg {
    width: 18px;
    height: 18px;
}

.tool.split,
.mini.split {
    width: auto;
    display: flex;
    align-items: center;
    gap: 4px;
}

.mini.split {
    gap: 2px;
}

.tool.slim {
    width: 12px;
    display: flex;
    align-items: center;
}

.tool .chev,
.row .chev,
.mini .chev,
.chev {
    width: 12px;
    height: 12px;
}

.mini .chev {
    width: 10px;
    height: 10px;
}

.row {
    display: flex;
    align-items: center;
    gap: 6px;
    height: 22px;
}

.tight .row {
    height: 18px;
    gap: 3px;
    font-size: 11px;
}

.row .chev {
    margin-left: auto;
}

.row.swap {
    gap: 3px;
    font-size: 11px;
}

.big {
    width: 40px;
    padding-top: 5px;
    display: flex;
    flex-direction: column;
    align-items: center;
    line-height: 16px;
}

.big-icon {
    width: 36px;
    height: 36px;
    margin-bottom: 8px;
}

.tool-grid {
    display: grid;
    gap: 8px 10px;
}

.tool-grid.three {
    grid-template-columns: repeat(3, 22px);
}

.tool-grid.four {
    grid-template-columns: repeat(3, 22px) 12px;
    column-gap: 9px;
}

.line {
    display: flex;
    gap: 10px;
}

.text-tools .line {
    width: 140px;
    gap: 3px;
    justify-content: space-between;
}

.pick {
    display: flex;
    align-items: center;
    height: 22px;
    border: 1px solid #777;
    border-radius: 3px;
    padding-right: 2px;
}

.pick.font { width: 78px; }
.pick.size { width: 59px; }

.pick select {
    flex: 1;
    min-width: 0;
    appearance: none;
    border: 0;
    padding: 0 0 0 3px;
    background: none;
    font: 10px/20px var(--ui);
    color: #444;
}

.pick .chev {
    width: 8px;
    height: 8px;
}

.tool.glyph {
    width: 16px;
    font-size: 13px;
    line-height: 22px;
}

.glyph sub,
.glyph sup {
    font-size: 8px;
    line-height: 0;
    font-weight: 400;
    color: #1b87cc;
}

.ital {
    font-family: "Liberation Serif", serif;
    font-size: 15px;
}

/* workspace */
.workspace {
    flex: 1;
    display: flex;
    gap: 16px;
    padding: 16px 15px 15px;
}

.slide {
    flex: 1;
    min-width: 0;
    display: flex;
    flex-direction: column;
    background: #fff;
    border: 1px solid #d4d4d4;
    font-family: var(--slide);
    color: #000;
    padding-bottom: 20px;
}

.slide-head {
    display: flex;
    justify-content: space-between;
    align-items: flex-start;
    padding: 17px 33px 0 44px;
}

.slide-title {
    font-size: 37px;
    line-height: 44px;
    font-weight: 600;
}

.brand {
    display: flex;
    gap: 6px;
    border-left: 4px solid #dc1f3f;
    padding-left: 15px;
}

.brand span {
    font-family: Roboto, sans-serif;
    font-size: 26px;
    line-height: 39px;
}

.brand svg {
    width: 20px;
    height: 20px;
    margin-top: 4px;
}

.slide-body {
    flex: 1;
    display: flex;
    align-items: flex-start;
    justify-content: space-between;
    padding: 42px 176px 0 124px;
}

.points {
    width: 379px;
    padding: 7px 0 0;
    font-size: 16px;
    line-height: 22px;
}

.points li {
    margin: 0 0 18px;
}

.points b {
    font-weight: 600;
}

.chart {
    flex: 0 0 581px;
    display: flex;
    padding: 8px;
    box-shadow: inset 0 0 10px 3px #4a7cff;
    font-size: 16px;
}

.bars {
    flex: 0 0 329px;
    padding-top: 1px;
    border-right: 2px solid #222;
}

.bar-row {
    height: 54px;
    display: flex;
    align-items: center;
    justify-content: flex-end;
    gap: 8px;
}

.bar-row.zero {
    padding-right: 16px;
}

.bar {
    height: 26px;
    background: #5b9cff;
}

.bar-labels {
    display: flex;
    flex-direction: column;
    justify-content: space-around;
    padding: 4px 0 3px 9px;
    font-weight: 500;
    white-space: nowrap;
}

.slide-foot {
    display: flex;
    align-items: center;
    justify-content: space-between;
    height: 32px;
    padding-left: 32px;
    background: #ededef;
    font-size: 14px;
    font-weight: 500;
}

.page-no {
    width: 92px;
    padding-left: 3px;
    line-height: 32px;
    text-align: center;
    font-weight: 400;
    color: #fff;
    background: #e8173d;
    clip-path: polygon(28px 0, 100% 0, 100% 100%, 0 100%);
}

/* assist pane */
.pane {
    flex: 0 0 174px;
    display: flex;
    flex-direction: column;
    font-size: 8px;
    line-height: 10px;
    text-rendering: geometricPrecision;
    box-shadow: 0 1px 3px rgba(0, 0, 0, 0.18);
}

.tabs {
    display: flex;
    justify-content: space-between;
    padding: 4px 6px 0;
    background: #fff;
    border-bottom: 1px solid #dcdfe8;
}

.tab {
    width: 22px;
    height: 25px;
    padding: 2px 2px 3px;
    border-bottom: 2px solid transparent;
}

.tab svg {
    width: 18px;
    height: 18px;
}

.tab.active {
    background: #ebf2ff;
    border-color: #3f7bfa;
}

.chat {
    flex: 1;
    display: flex;
    flex-direction: column;
    justify-content: space-between;
    padding: 129px 10px 0;
}

.bubble {
    align-self: flex-end;
    width: 130px;
    padding: 9px 6px;
    background: #fff;
    border: 1px solid #e4e4e4;
    border-radius: 4px;
}

.results {
    background: #fff;
    border: 1px solid #ccc;
    border-top: 0;
    border-bottom-color: #eee;
    border-radius: 0 0 4px 4px;
}

.result {
    width: 100%;
    display: flex;
    justify-content: space-between;
    padding: 7px 9px 6px 6px;
    text-align: left;
    text-rendering: inherit;
    border-top: 1px solid #ccc;
}

.result span {
    width: 126px;
}

.result .chev {
    width: 10px;
    height: 10px;
    color: #666;
}

.prompts {
    display: flex;
    flex-direction: column;
    gap: 4px;
    padding: 12px 10px 4px;
}

.prompts h3 {
    font-size: 8px;
    color: #555;
}

.prompts button {
    padding: 4px 0 4px 6px;
    text-align: left;
    text-rendering: inherit;
    white-space: nowrap;
    background: #edf3ff;
    border: 1px solid #6d93f5;
    border-radius: 2px;
}

.ask {
    margin: 0 10px 10px;
    background: #fff;
    border: 1px solid #ccc;
    border-radius: 3px;
}

.ask textarea {
    display: block;
    width: 100%;
    height: 38px;
    padding: 8px 7px 0;
    border: 0;
    resize: none;
    background: none;
    font: 8px/12px var(--ui);
    text-rendering: inherit;
}

.ask textarea::placeholder {
    color: #777;
}

.ask-actions {
    display: flex;
    justify-content: space-between;
    padding: 2px 8px 6px 7px;
}

.ask-actions svg {
    width: 12px;
    height: 12px;
}

/* status bar */
.status {
    display: flex;
    align-items: center;
    gap: 12px;
    height: 15px;
    padding: 2px 15px 0;
    background: #dcdcdc;
    border-radius: 0 0 15px 15px;
    font-size: 9px;
    line-height: 12px;
    color: #555;
}

.zoom {
    margin-left: auto;
    display: flex;
    align-items: center;
    gap: 5px;
}

.zoom svg {
    width: 8px;
    height: 8px;
}

.zoom output {
    margin-left: 6px;
}

.zoom input {
    appearance: none;
    width: 62px;
    height: 2px;
    margin: 0;
    background: #999;
}

.zoom input::-webkit-slider-thumb {
    appearance: none;
    width: 11px;
    height: 11px;
    border-radius: 50%;
    background: #fff;
}

/* floating card */
.card {
    position: absolute;
    top: 387px;
    right: -33px;
    width: 272px;
    padding: 5px 4px 10px 8px;
    background: #dae8ff;
    border: 4px solid var(--blue);
    border-radius: 8px;
    box-shadow: 0 4px 10px rgba(0, 0, 0, 0.28);
    font-size: 14px;
    line-height: 21px;
}

.card-head {
    display: flex;
    justify-content: space-between;
    align-items: flex-start;
    padding-right: 9px;
    margin-bottom: 21px;
}

.card-head h2 {
    font-size: 14px;
    line-height: 21px;
}

.card-head svg {
    width: 14px;
    height: 14px;
    margin-top: 8px;
}

.released {
    margin: 5px 0 19px;
    color: #666;
}

.insert {
    width: 248px;
    height: 36px;
    display: flex;
    align-items: center;
    justify-content: center;
    gap: 8px;
    background: var(--blue-strong);
    border-radius: 2px;
    color: #fff;
}

.insert svg {
    width: 16px;
    height: 14px;
}
```
